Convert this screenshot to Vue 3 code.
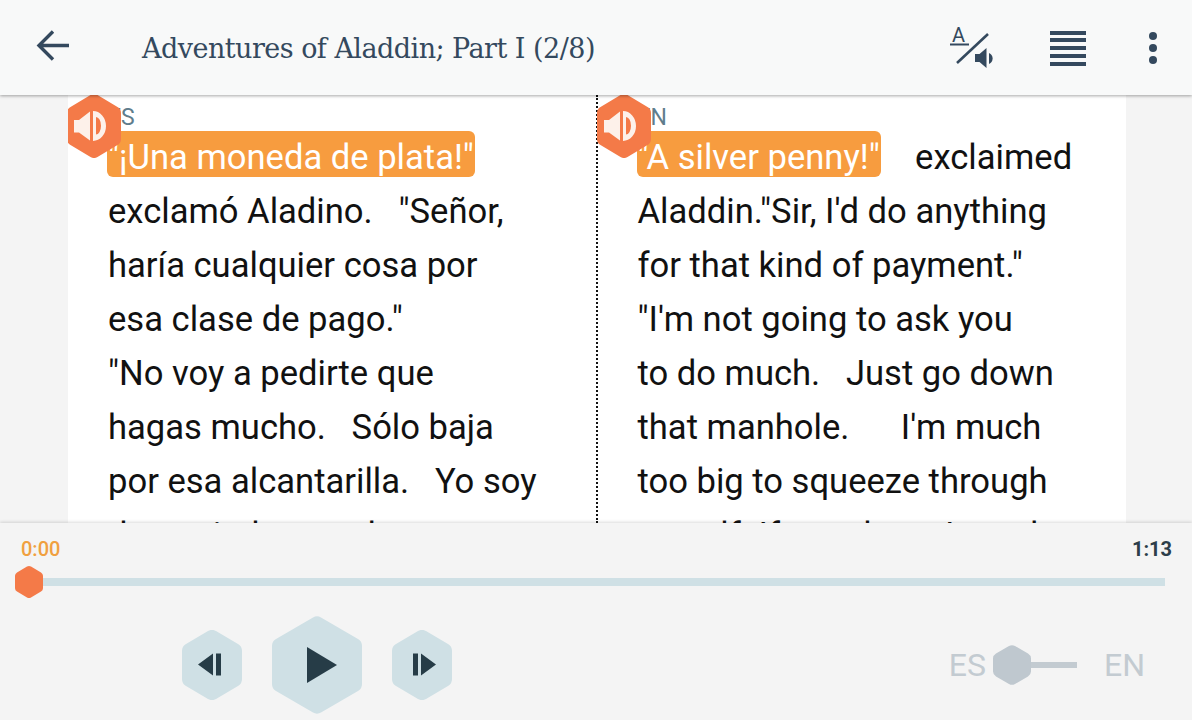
<template>
  <div class="reader">
    <header class="topbar">
      <button class="icon-btn back" aria-label="Back">
        <svg width="36" height="36" viewBox="0 0 36 36" fill="none" stroke="#34495e" stroke-width="3.4">
          <path d="M34 15.500H4M18 1.500L4 15.500l14 14" />
        </svg>
      </button>
      <h1 class="book-title">{{ title }}</h1>
      <div class="top-actions">
        <div class="mode-icon">
          <span class="mode-a">A</span>
          <svg width="44" height="42" viewBox="0 0 44 42">
            <path d="M0 17.500H19" stroke="#34495e" stroke-width="2" />
            <path d="M7 36L38 7" stroke="#34495e" stroke-width="2.600" />
            <path d="M25 27h4.500l7-6v20l-7-6H25z" fill="#34495e" />
            <path d="M39 26a6 6 0 0 1 0 11z" fill="#34495e" />
          </svg>
        </div>
        <div class="lines-icon">
          <span v-for="n in 5" :key="n"></span>
        </div>
        <div class="dots-icon">
          <span v-for="n in 3" :key="n"></span>
        </div>
      </div>
    </header>

    <main class="pages">
      <section v-for="page in pages" :key="page.lang" class="page">
        <div class="speaker">
          <svg width="54" height="64" viewBox="0 0 54 64">
            <path d="M23.500 1a7 7 0 0 1 7 0L50.500 13a7 7 0 0 1 3.500 6V45a7 7 0 0 1-3.500 6L30.500 63a7 7 0 0 1-7 0L3.500 51a7 7 0 0 1-3.500-6V19a7 7 0 0 1 3.500-6Z" fill="#f47a48" />
            <path d="M7 26h5l11-8.500v29l-11-8h-5z" fill="#fdf1ea" />
            <path fill-rule="evenodd" d="M26 17a13 15 0 0 1 0 30zM29 23v17.500a5 8.750 0 0 0 0-17.500z" fill="#fdf1ea" />
          </svg>
        </div>
        <div class="lang-label">{{ page.lang }}</div>
        <div class="text-line">
          <span class="highlight">{{ page.highlight }}</span>{{ page.first }}
        </div>
        <div v-for="(line, i) in page.lines" :key="i" class="text-line">{{ line }}</div>
      </section>
    </main>

    <footer class="player">
      <div class="times">
        <span class="time-now">0:00</span>
        <span class="time-total">1:13</span>
      </div>
      <div class="track">
        <svg class="thumb" width="28" height="32" viewBox="0 0 28 32">
          <path d="M12 .600a4 4 0 0 1 4 0L26 6.400a4 4 0 0 1 2 3.400V22.200a4 4 0 0 1-2 3.400L16 31.400a4 4 0 0 1-4 0L2 25.600a4 4 0 0 1-2-3.400V9.800a4 4 0 0 1 2-3.400Z" fill="#f47a48" />
        </svg>
        <div class="track-bar"></div>
      </div>
      <div class="controls-row">
        <div class="controls">
          <button class="hex-btn" aria-label="Previous">
            <svg width="60" height="70" viewBox="0 0 60 70">
              <path :d="smallHex" fill="#cfe0e5" />
              <path d="M16 34.500L31 23.500V45.500Z M34 23.500H39V45.500H34Z" fill="#263c47" />
            </svg>
          </button>
          <button class="hex-btn" aria-label="Play">
            <svg width="90" height="98" viewBox="0 0 90 98">
              <path d="M41 1.500a8 8 0 0 1 8 0L86 23a8 8 0 0 1 4 7V68a8 8 0 0 1-4 7L49 96.500a8 8 0 0 1-8 0L4 75a8 8 0 0 1-4-7V30a8 8 0 0 1 4-7Z" fill="#cfe0e5" />
              <path d="M35 31L65 49L35 67Z" fill="#263c47" />
            </svg>
          </button>
          <button class="hex-btn" aria-label="Next">
            <svg width="60" height="70" viewBox="0 0 60 70">
              <path :d="smallHex" fill="#cfe0e5" />
              <path d="M21 23.500H26V45.500H21Z M29 23.500L44 34.500L29 45.500Z" fill="#263c47" />
            </svg>
          </button>
        </div>
        <div class="lang-switch">
          <span>ES</span>
          <div class="switch">
            <svg width="38" height="40" viewBox="0 0 38 40">
              <path d="M16 1a6 6 0 0 1 6 0L35 8.500a6 6 0 0 1 3 5V26.500a6 6 0 0 1-3 5L22 39a6 6 0 0 1-6 0L3 31.500a6 6 0 0 1-3-5V13.500a6 6 0 0 1 3-5Z" fill="#bfc8cf" />
            </svg>
            <div class="switch-line"></div>
          </div>
          <span>EN</span>
        </div>
      </div>
    </footer>
  </div>
</template>

<script setup>
const title = 'Adventures of Aladdin; Part I (2/8)'

const smallHex = 'M26 1a8 8 0 0 1 8 0L56 14a8 8 0 0 1 4 7V49a8 8 0 0 1-4 7L34 69a8 8 0 0 1-8 0L4 56a8 8 0 0 1-4-7V21a8 8 0 0 1 4-7Z'

const pages = [
  {
    lang: 'ES',
    highlight: '"¡Una moneda de plata!"',
    first: '',
    lines: [
      'exclamó Aladino.   "Señor,',
      'haría cualquier cosa por',
      'esa clase de pago."',
      '"No voy a pedirte que',
      'hagas mucho.   Sólo baja',
      'por esa alcantarilla.   Yo soy',
      'demasiado grande para'
    ]
  },
  {
    lang: 'EN',
    highlight: '"A silver penny!"',
    first: '    exclaimed',
    lines: [
      'Aladdin."Sir, I\'d do anything',
      'for that kind of payment."',
      '"I\'m not going to ask you',
      'to do much.   Just go down',
      'that manhole.      I\'m much',
      'too big to squeeze through',
      'myself. If you do as I need,'
    ]
  }
]
</script>

<style>
html,
body {
  margin: 0;
  background: #f4f4f4;
}
</style>

<style scoped>
.reader {
  width: 1192px;
  height: 720px;
  display: flex;
  flex-direction: column;
  overflow: hidden;
  background: #f4f4f4;
  font-family: Roboto, sans-serif;
}

.topbar {
  position: relative;
  z-index: 3;
  flex: none;
  height: 95px;
  display: flex;
  align-items: center;
  background: #f8f9f9;
  box-shadow: 0 1px 3px rgba(0, 0, 0, 0.35);
}

.icon-btn {
  border: none;
  background: none;
  padding: 0;
  display: flex;
}

.back {
  margin-left: 35px;
  margin-top: 1px;
}

.book-title {
  margin: 2px 0 0 71px;
  font-family: "DejaVu Serif", serif;
  font-size: 27px;
  font-weight: 400;
  letter-spacing: -0.530px;
  color: #34495e;
  white-space: nowrap;
}

.top-actions {
  margin-left: auto;
  display: flex;
  align-items: center;
  margin-right: 35px;
}

.mode-icon {
  position: relative;
  width: 44px;
  height: 42px;
  margin-right: 56px;
  margin-top: 1px;
}

.mode-a {
  position: absolute;
  left: 2px;
  top: -2px;
  font-size: 20px;
  line-height: 20px;
  color: #34495e;
}

.lines-icon {
  display: flex;
  flex-direction: column;
  gap: 3.750px;
  width: 36px;
  margin-right: 63px;
  margin-top: 1px;
}

.lines-icon span {
  height: 4px;
  background: #34495e;
}

.dots-icon {
  display: flex;
  flex-direction: column;
  gap: 4px;
  margin-top: 1px;
}

.dots-icon span {
  width: 8px;
  height: 8px;
  border-radius: 50%;
  background: #34495e;
}

.pages {
  flex: 1;
  min-height: 0;
  display: flex;
  margin: 0 66px 0 68px;
  background: #fff;
  overflow: hidden;
}

.page {
  position: relative;
  flex: 1;
  padding-left: 40px;
}

.page + .page {
  border-left: 2px dotted #111;
  margin-left: -1px;
}

.speaker {
  position: absolute;
  left: -1px;
  top: -1px;
  z-index: 2;
  display: flex;
}

.lang-label {
  margin-top: 11px;
  font-size: 23px;
  line-height: 24px;
  color: #5f7d8c;
}

.text-line {
  height: 54px;
  line-height: 54px;
  font-size: 34.600px;
  color: #111;
  white-space: pre;
}

.highlight {
  display: inline-block;
  vertical-align: top;
  height: 46px;
  margin: 1px 0 0 -1px;
  padding: 0 1px;
  line-height: 52px;
  border-radius: 6px;
  background: #f79c3f;
  color: #fff;
}

.player {
  position: relative;
  z-index: 3;
  flex: none;
  height: 197px;
  background: #f4f4f4;
  box-shadow: 0 -1px 3px rgba(0, 0, 0, 0.15);
  padding: 16px 19px 0 21px;
  box-sizing: border-box;
}

.times {
  display: flex;
  justify-content: space-between;
  font-size: 20px;
  line-height: 21px;
  font-weight: 500;
}

.time-now {
  color: #f0a040;
}

.time-total {
  color: #2c3e4a;
  font-weight: 700;
  margin-right: 1px;
}

.track {
  position: relative;
  margin: 6px 8px 0 0;
  height: 32px;
  display: flex;
  align-items: center;
}

.thumb {
  position: absolute;
  left: -6px;
  top: 0;
}

.track-bar {
  width: 100%;
  height: 8px;
  background: #cfe0e5;
}

.controls-row {
  margin-top: 18px;
  display: flex;
  justify-content: space-between;
  align-items: center;
}

.controls {
  display: flex;
  align-items: center;
  gap: 30px;
  margin-left: 161px;
}

.hex-btn {
  border: none;
  background: none;
  padding: 0;
  display: flex;
}

.lang-switch {
  display: flex;
  align-items: center;
  margin-right: 28px;
  font-size: 32px;
  color: #c3cbd1;
}

.switch {
  width: 84px;
  height: 40px;
  margin: 0 27px 0 7px;
  display: flex;
  align-items: center;
}

.switch-line {
  height: 6px;
  flex: 1;
  background: #c3cbd1;
}
</style>
